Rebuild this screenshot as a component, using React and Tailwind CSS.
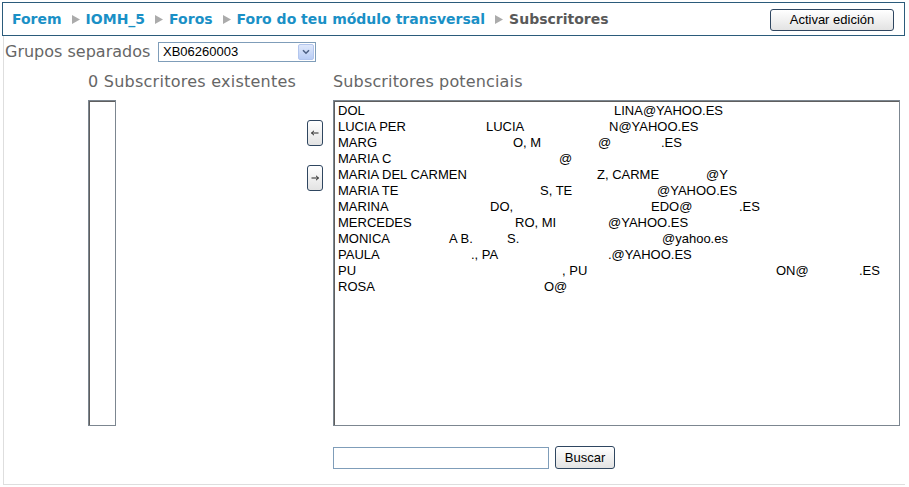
import React from "react";

const rows = [
  [[338, "DOL"], [614, "LINA@YAHOO.ES"]],
  [[338, "LUCIA PER"], [486, "LUCIA"], [609, "N@YAHOO.ES"]],
  [[338, "MARG"], [513, "O, M"], [598, "@"], [661, ".ES"]],
  [[338, "MARIA C"], [559, "@"]],
  [[338, "MARIA DEL CARMEN"], [597, "Z, CARME"], [706, "@Y"]],
  [[338, "MARIA TE"], [540, "S, TE"], [657, "@YAHOO.ES"]],
  [[338, "MARINA"], [490, "DO,"], [651, "EDO@"], [739, ".ES"]],
  [[338, "MERCEDES"], [515, "RO, MI"], [608, "@YAHOO.ES"]],
  [[338, "MONICA"], [449, "A B."], [507, "S."], [662, "@yahoo.es"]],
  [[338, "PAULA"], [471, "., PA"], [608, ".@YAHOO.ES"]],
  [[338, "PU"], [562, ", PU"], [776, "ON@"], [859, ".ES"]],
  [[338, "ROSA"], [544, "O@"]],
];

function Row({ segs }) {
  return (
    <div className="flex h-[16px] leading-[16px] whitespace-pre">
      {segs.map(([x, t], i) => {
        const next = segs[i + 1];
        return (
          <span
            key={i}
            className="inline-block shrink-0"
            style={next ? { width: next[0] - x } : undefined}
          >
            {t}
          </span>
        );
      })}
    </div>
  );
}

function Sep() {
  return (
    <svg width="8" height="9" viewBox="0 0 8 9" className="ml-[10px] mr-[6px] shrink-0">
      <polygon points="0,0 8,4.5 0,9" fill="#ababab" />
    </svg>
  );
}

function Arrow({ left }) {
  return (
    <svg width="8" height="6" viewBox="0 0 8 6">
      {left ? (
        <path d="M0.5 3 H7.5 M0.5 3 L3 0.8 M0.5 3 L3 5.2" stroke="#111" strokeWidth="0.9" fill="none" />
      ) : (
        <path d="M0.5 3 H7.5 M7.5 3 L5 0.8 M7.5 3 L5 5.2" stroke="#111" strokeWidth="0.9" fill="none" />
      )}
    </svg>
  );
}

const btn =
  "border border-[#2f4660] rounded-[3px] bg-gradient-to-b from-[#ffffff] to-[#e3e3e3] text-black font-['Liberation_Sans',Arial,sans-serif]";

export default function App() {
  return (
    <div className="w-[909px] h-[487px] bg-white overflow-hidden font-['DejaVu_Sans',Verdana,sans-serif]">
      <div className="ml-[2px] mt-[2px] w-[903px] h-[34px] border border-[#2b5b7b] flex items-center justify-between pl-[9px] pr-[10px]">
        <div className="flex items-center text-[14px] font-bold text-[#1a90c6] leading-none">
          <span>Forem</span>
          <Sep />
          <span>IOMH_5</span>
          <Sep />
          <span>Foros</span>
          <Sep />
          <span>Foro do teu módulo transversal</span>
          <Sep />
          <span className="text-[#595959]">Subscritores</span>
        </div>
        <button className={`${btn} w-[124px] h-[22px] text-[13px] leading-none mt-[1px]`}>
          Activar edición
        </button>
      </div>

      <div className="ml-[3px] w-[902px] h-[449px] border-l border-b border-[#dedede]">
        <div className="flex items-center pt-[6px] h-[26px]">
          <span className="w-[154px] pl-[1px] text-[16px] text-[#666666] leading-none">Grupos separados</span>
          <div className="w-[158px] h-[20px] border border-[#7f9db9] flex items-center justify-between pl-[4px] pr-[1px] font-['Liberation_Sans',Arial,sans-serif] text-[13px] text-black">
            <span>XB06260003</span>
            <div className="w-[16px] h-[16px] bg-gradient-to-b from-[#dfe8fb] to-[#b9cdf5] border border-[#b3c6ee] rounded-[2px] flex items-center justify-center">
              <svg width="8" height="6" viewBox="0 0 8 6">
                <path d="M1 1.2 L4 4.2 L7 1.2" stroke="#4d6185" strokeWidth="1.6" fill="none" />
              </svg>
            </div>
          </div>
        </div>

        <div className="flex pl-[84px] mt-[10px]">
          <div className="w-[219px] shrink-0">
            <div className="h-[20px] text-[16px] tracking-[0.25px] text-[#666666] leading-[20px]">0 Subscritores existentes</div>
            <div className="mt-[8px] w-[28px] h-[326px] border border-[#7c8690] shadow-[inset_1px_1px_0_#5f5f5f]" />
          </div>
          <div className="w-[15px] shrink-0 pt-[48px] flex flex-col gap-[19px]">
            <button className={`${btn} w-[16px] h-[26px] flex items-center justify-center`}>
              <Arrow left />
            </button>
            <button className={`${btn} w-[16px] h-[26px] flex items-center justify-center`}>
              <Arrow />
            </button>
          </div>
          <div className="ml-[11px] w-[567px] shrink-0">
            <div className="h-[20px] text-[16px] tracking-[0.15px] text-[#666666] leading-[20px]">Subscritores potenciais</div>
            <div className="mt-[8px] w-[567px] h-[326px] border border-[#7c8690] shadow-[inset_1px_1px_0_#5f5f5f] pt-[2px] pl-[4px] font-['Liberation_Sans',Arial,sans-serif] text-[13px] text-black">
              {rows.map((r, i) => (
                <Row key={i} segs={r} />
              ))}
            </div>
            <div className="mt-[20px] flex items-center">
              <div className="w-[216px] h-[22px] border border-[#7f9db9]" />
              <button className={`${btn} ml-[6px] w-[60px] h-[23px] text-[13px] leading-none`}>Buscar</button>
            </div>
          </div>
        </div>
      </div>
    </div>
  );
}
